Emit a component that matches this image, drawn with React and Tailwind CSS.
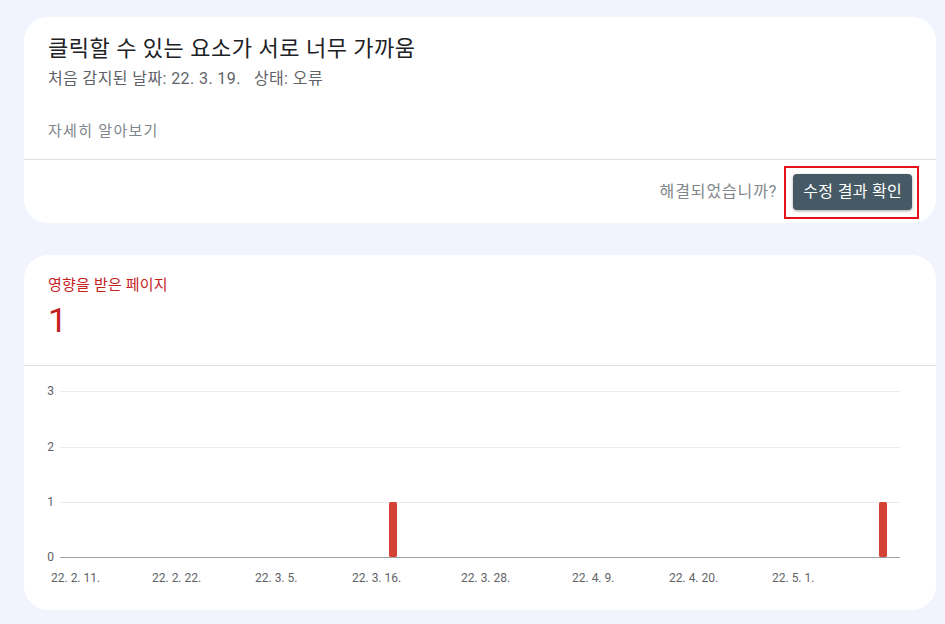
export default function App() {
  const font = { fontFamily: 'Roboto, "Noto Sans CJK KR", sans-serif' };
  const xLabels = [
    [27, '22. 2. 11.'],
    [128, '22. 2. 22.'],
    [231, '22. 3. 5.'],
    [328, '22. 3. 16.'],
    [437, '22. 3. 28.'],
    [548, '22. 4. 9.'],
    [645, '22. 4. 20.'],
    [748, '22. 5. 1.'],
  ];
  const grid = [
    [25, '3'],
    [81, '2'],
    [136, '1'],
  ];
  return (
    <div className="min-h-[624px] w-[945px] bg-[#f1f4fc] pl-6 pr-[9px] pt-[17px] pb-4" style={font}>
      <div className="w-[912px] rounded-[24px] bg-white">
        <div className="px-6 pt-[18px] pb-[18px]">
          <div className="text-[22px] leading-[28px] tracking-[0.5px] text-[#202124]">클릭할 수 있는 요소가 서로 너무 가까움</div>
          <div className="mt-[6px] text-[16px] leading-[20px] tracking-[0.4px] text-[#5f6368]">
            처음 감지된 날짜: 22. 3. 19.&nbsp;&nbsp; 상태: 오류
          </div>
          <div className="mt-[32px] text-[15px] leading-[20px] tracking-[1.3px] text-[#80868b]">자세히 알아보기</div>
        </div>
        <div className="h-px bg-[#e0e0e0]" />
        <div className="flex h-[63px] items-center justify-end gap-4 pr-6">
          <span className="text-[16px] tracking-[0.9px] text-[#80868b]">해결되었습니까?</span>
          <span className="relative">
            <button className="h-9 rounded-[4px] bg-[#455a64] px-[10px] text-[16px] tracking-[0.3px] text-white shadow-[0_1px_3px_rgba(0,0,0,0.35)]">
              수정 결과 확인
            </button>
            <span className="pointer-events-none absolute -top-2 -bottom-[9px] -left-[9px] -right-[7px] border-2 border-[#e3121b]" />
          </span>
        </div>
      </div>

      <div className="mt-[32px] w-[912px] rounded-[24px] bg-white">
        <div className="px-6 pt-5 pb-[25px]">
          <div className="text-[15px] leading-[20px] tracking-[0.2px] text-[#c5221f]">영향을 받은 페이지</div>
          <div className="mt-[5px] text-[34px] leading-[40px] text-[#c5221f]">1</div>
        </div>
        <div className="h-px bg-[#e0e0e0]" />
        <svg width="912" height="244" className="block">
          {grid.map(([y, l]) => (
            <g key={l}>
              <line x1="36" x2="876" y1={y + 0.5} y2={y + 0.5} stroke="#e8eaed" strokeWidth="1" />
              <text x="30" y={y + 4} textAnchor="end" fontSize="12" fill="#5f6368" style={font}>
                {l}
              </text>
            </g>
          ))}
          <text x="30" y="195" textAnchor="end" fontSize="12" fill="#5f6368" style={font}>
            0
          </text>
          <rect x="365" y="136" width="8" height="55" rx="1.5" fill="#d44236" />
          <rect x="855" y="136" width="8" height="55" rx="1.5" fill="#d44236" />
          <line x1="36" x2="876" y1="191.5" y2="191.5" stroke="#9aa0a6" strokeWidth="1" />
          {xLabels.map(([x, l]) => (
            <text key={l} x={x} y="216" fontSize="12" fill="#5f6368" style={font}>
              {l}
            </text>
          ))}
        </svg>
      </div>
    </div>
  );
}
